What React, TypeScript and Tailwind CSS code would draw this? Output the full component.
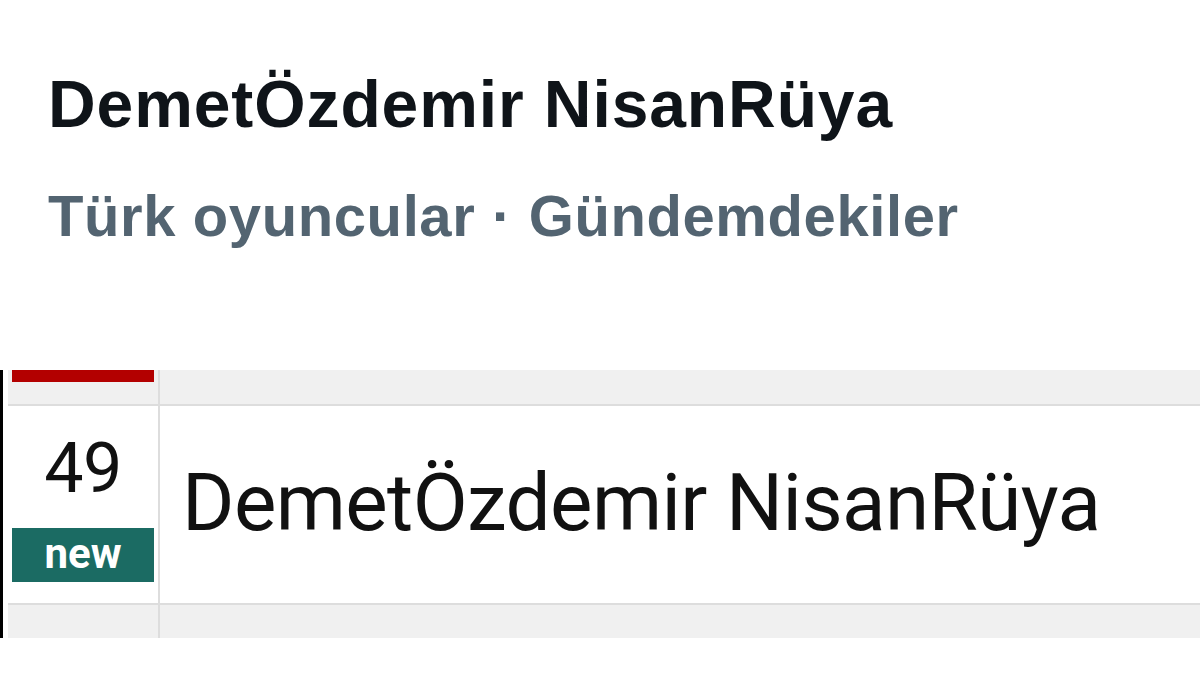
export default function App() {
  return (
    <div className="w-[1200px] h-[673px] bg-white overflow-hidden flex flex-col">
      <TrendHeader />
      <RankTable />
    </div>
  );
}

function TrendHeader() {
  return (
    <div className="pl-[48px] pt-[71px] flex flex-col gap-[50px] font-['Liberation_Sans',Arial,sans-serif] font-bold">
      <div className="text-[66px] leading-none text-[#0f1419] tracking-[0.9px]">
        DemetÖzdemir NisanRüya
      </div>
      <div className="text-[58px] leading-none text-[#536471] tracking-[0.6px]">
        Türk oyuncular · Gündemdekiler
      </div>
    </div>
  );
}

function RankTable() {
  return (
    <div className="mt-[125px] flex h-[268px] font-['Roboto',sans-serif]">
      <div className="w-[3px] bg-black" />
      <div className="ml-[5px] flex-1 flex flex-col">
        {/* previous row, cut off */}
        <div className="h-[34px] flex bg-[#f0f0f0] border-b-2 border-[#dddddd] box-content">
          <div className="w-[150px] px-[4px]">
            <div className="h-[12px] bg-[#b30000]" />
          </div>
          <div className="w-[2px] bg-[#dddddd]" />
          <div className="flex-1" />
        </div>

        <div className="h-[197px] flex bg-white border-b-2 border-[#dddddd] box-content">
          <div className="w-[150px] flex flex-col items-center">
            <div className="mt-[27px] text-[70px] leading-none text-[#111] tracking-[-0.5px]">
              49
            </div>
            <div className="mt-[25px] self-stretch mx-[4px] h-[54px] bg-[#1b6b63] flex items-center justify-center">
              <span className="text-white font-bold text-[42px] leading-none pb-[2px]">
                new
              </span>
            </div>
          </div>
          <div className="w-[2px] bg-[#dddddd]" />
          <div className="flex-1 flex items-center pl-[22px]">
            <span className="text-[80px] leading-none text-[#111] tracking-[-0.6px] pb-[4px]">
              DemetÖzdemir NisanRüya
            </span>
          </div>
        </div>

        <div className="flex-1 flex bg-[#f0f0f0]">
          <div className="w-[150px]" />
          <div className="w-[2px] bg-[#dddddd]" />
          <div className="flex-1" />
        </div>
      </div>
    </div>
  );
}
